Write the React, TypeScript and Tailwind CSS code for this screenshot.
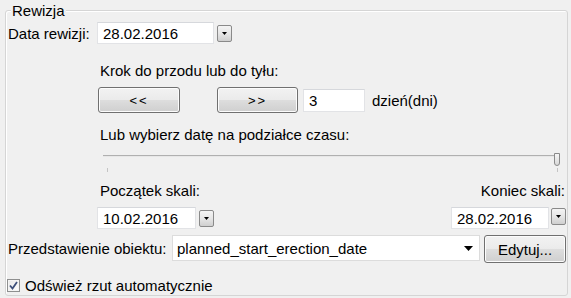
import type { ReactNode } from "react";

function TextBox({ value, className }: { value: string; className: string }) {
  return (
    <div
      className={`flex items-center border border-[#e2e3e6] border-t-[#d6d8dc] bg-white pl-[5px] ${className}`}
    >
      {value}
    </div>
  );
}

function DropButton({ className = "" }: { className?: string }) {
  return (
    <div
      className={`flex h-[17px] w-[15px] items-center justify-center rounded-[2px] border border-[#8a8a8a] bg-gradient-to-b from-[#f4f4f4] via-[#e6e6e6] to-[#cfcfcf] ${className}`}
    >
      <svg width="5" height="3" viewBox="0 0 5 3">
        <path d="M0 0h5L2.5 3z" fill="#000" />
      </svg>
    </div>
  );
}

function PushButton({ children, className }: { children: ReactNode; className: string }) {
  return (
    <div
      className={`flex items-center justify-center rounded-[3px] border border-[#707070] bg-[linear-gradient(#f2f2f2_0%,#ebebeb_48%,#dddddd_52%,#cfcfcf_100%)] shadow-[inset_0_0_0_1px_#fcfcfc] ${className}`}
    >
      {children}
    </div>
  );
}

function DatePicker({ value, width }: { value: string; width: string }) {
  return (
    <div className="flex items-center gap-[3px]">
      <TextBox value={value} className={`h-[22px] ${width}`} />
      <DropButton />
    </div>
  );
}

export default function App() {
  return (
    <div className="h-[298px] w-[571px] bg-[#f0f0f0] pt-[10px] pl-[5px] text-[15px] leading-none text-black [font-family:'Liberation_Sans',Arial,sans-serif]">
      <div className="relative h-[286px] w-[563px] rounded-[3px] border border-[#d5d5d5] shadow-[inset_1px_1px_0_#fff]">
        <span className="absolute -top-[8px] left-[5px] bg-[#f0f0f0] px-[1px]">Rewizja</span>

        <div className="mt-[11px] flex h-[22px] items-center pl-[2px]">
          <span className="w-[89px]">Data rewizji:</span>
          <DatePicker value="28.02.2016" width="w-[117px]" />
        </div>

        <div className="mt-[16px] flex h-[20px] items-center pl-[94px]">
          Krok do przodu lub do tyłu:
        </div>

        <div className="mt-[7px] flex h-[26px] items-center pl-[92px]">
          <PushButton className="h-[26px] w-[82px] text-[13px] tracking-[2px]">&lt;&lt;</PushButton>
          <PushButton className="ml-[37px] h-[26px] w-[81px] text-[13px] tracking-[2px]">&gt;&gt;</PushButton>
          <TextBox value="3" className="ml-[5px] h-[23px] w-[62px]" />
          <span className="ml-[7px]">dzień(dni)</span>
        </div>

        <div className="mt-[11px] flex h-[20px] items-center pl-[94px]">
          Lub wybierz datę na podziałce czasu:
        </div>

        <div className="relative mt-[4px] ml-[97px] h-[30px] w-[457px]">
          <div className="absolute top-[7px] right-[3px] left-0 h-[2px] border-t border-[#b0b0b0] border-b-white bg-[#e7e7e7]" />
          <div className="absolute top-[5px] right-0 h-[13px] w-[6px] rounded-b-[3px] border border-[#8a8a8a] bg-gradient-to-b from-[#f6f6f6] to-[#d8d8d8]" />
          <div className="absolute top-[20px] left-[4px] h-[4px] w-px bg-[#c4c4c4]" />
          <div className="absolute top-[20px] right-[2px] h-[4px] w-px bg-[#c4c4c4]" />
        </div>

        <div className="mt-[2px] flex h-[20px] items-center justify-between pr-[2px] pl-[94px]">
          <span>Początek skali:</span>
          <span>Koniec skali:</span>
        </div>

        <div className="mt-[7px] flex h-[22px] items-center justify-between pr-[1px] pl-[91px]">
          <DatePicker value="10.02.2016" width="w-[99px]" />
          <div className="flex items-center gap-[2px]">
            <TextBox value="28.02.2016" className="h-[22px] w-[98px]" />
            <DropButton className="-mt-[3px]" />
          </div>
        </div>

        <div className="mt-[6px] flex items-start pl-[2px]">
          <span className="flex h-[26px] w-[164px] items-center">Przedstawienie obiektu:</span>
          <div className="flex h-[26px] w-[308px] items-center justify-between border border-[#dcdcdc] bg-white pr-[6px] pl-[4px]">
            <span>planned_start_erection_date</span>
            <svg width="9" height="5" viewBox="0 0 9 5">
              <path d="M0 0h9L4.5 5z" fill="#000" />
            </svg>
          </div>
          <PushButton className="ml-[4px] h-[28px] w-[82px]">Edytuj...</PushButton>
        </div>

        <div className="mt-[12px] flex h-[20px] items-center pl-[1px]">
          <div className="flex h-[13px] w-[13px] items-center justify-center border border-[#8e8f8f] bg-gradient-to-br from-[#e6e6e6] to-[#ffffff] shadow-[inset_0_0_0_1px_#f4f4f4]">
            <svg width="9" height="9" viewBox="0 0 9 9">
              <path d="M1 4.5 L3.5 7.5 L8 1" fill="none" stroke="#3d4f7a" strokeWidth="1.8" />
            </svg>
          </div>
          <span className="ml-[5px]">Odśwież rzut automatycznie</span>
        </div>
      </div>
    </div>
  );
}
